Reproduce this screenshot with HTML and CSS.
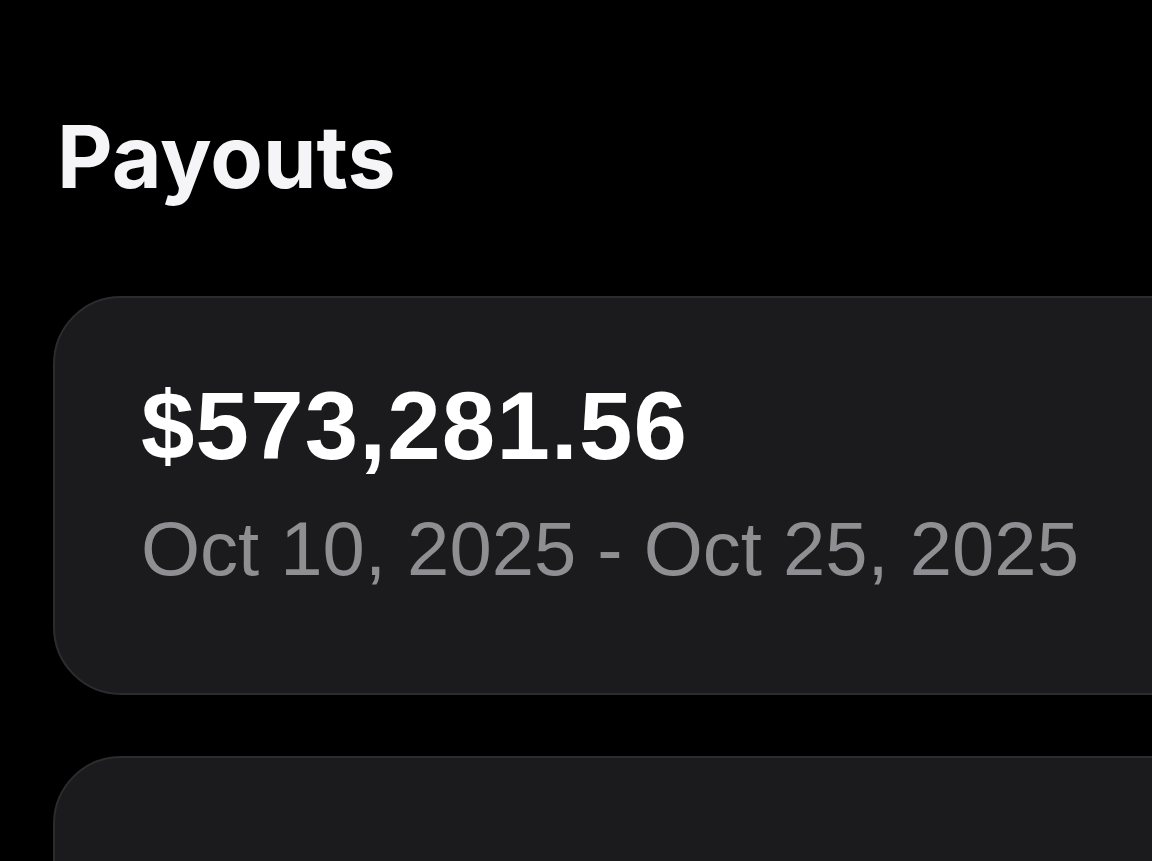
FILE: index.html
```html
<!DOCTYPE html>
<html>
<head>
<meta charset="utf-8">
<link rel="stylesheet" href="styles.css">
</head>
<body>
<main class="page">
  <h1 class="title">Payouts</h1>
  <section class="card">
    <div class="amount">$573,281.56</div>
    <div class="range">Oct 10, 2025 - Oct 25, 2025</div>
  </section>
  <section class="card card-next"></section>
</main>
</body>
</html>
```

FILE: styles.css
```css
html, body {
  margin: 0;
  padding: 0;
  background: #000;
  height: 100%;
  overflow: hidden;
}
.page {
  display: flex;
  flex-direction: column;
  padding: 114px 0 0 53px;
  overflow: hidden;
}
.title {
  margin: 0 0 0 4px;
  font-family: Inter, "Liberation Sans", sans-serif;
  font-weight: 700;
  font-size: 86px;
  line-height: 86px;
  color: #f5f5f7;
  letter-spacing: 0;
}
.card {
  margin-top: 96px;
  margin-right: -120px;
  background: #1b1b1d;
  border: 2px solid #2c2c2f;
  border-radius: 68px;
  padding: 80px 0 106px 86px;
  display: flex;
  flex-direction: column;
  gap: 38px;
}
.card-next {
  margin-top: 61px;
  height: 300px;
  padding: 0;
}
.amount {
  font-family: "Liberation Sans", Arial, sans-serif;
  font-weight: 700;
  font-size: 96px;
  line-height: 95px;
  letter-spacing: 1.2px;
  color: #ffffff;
}
.range {
  font-family: "Liberation Sans", Arial, sans-serif;
  font-size: 76px;
  line-height: 76px;
  color: #8e8e93;
}
```
